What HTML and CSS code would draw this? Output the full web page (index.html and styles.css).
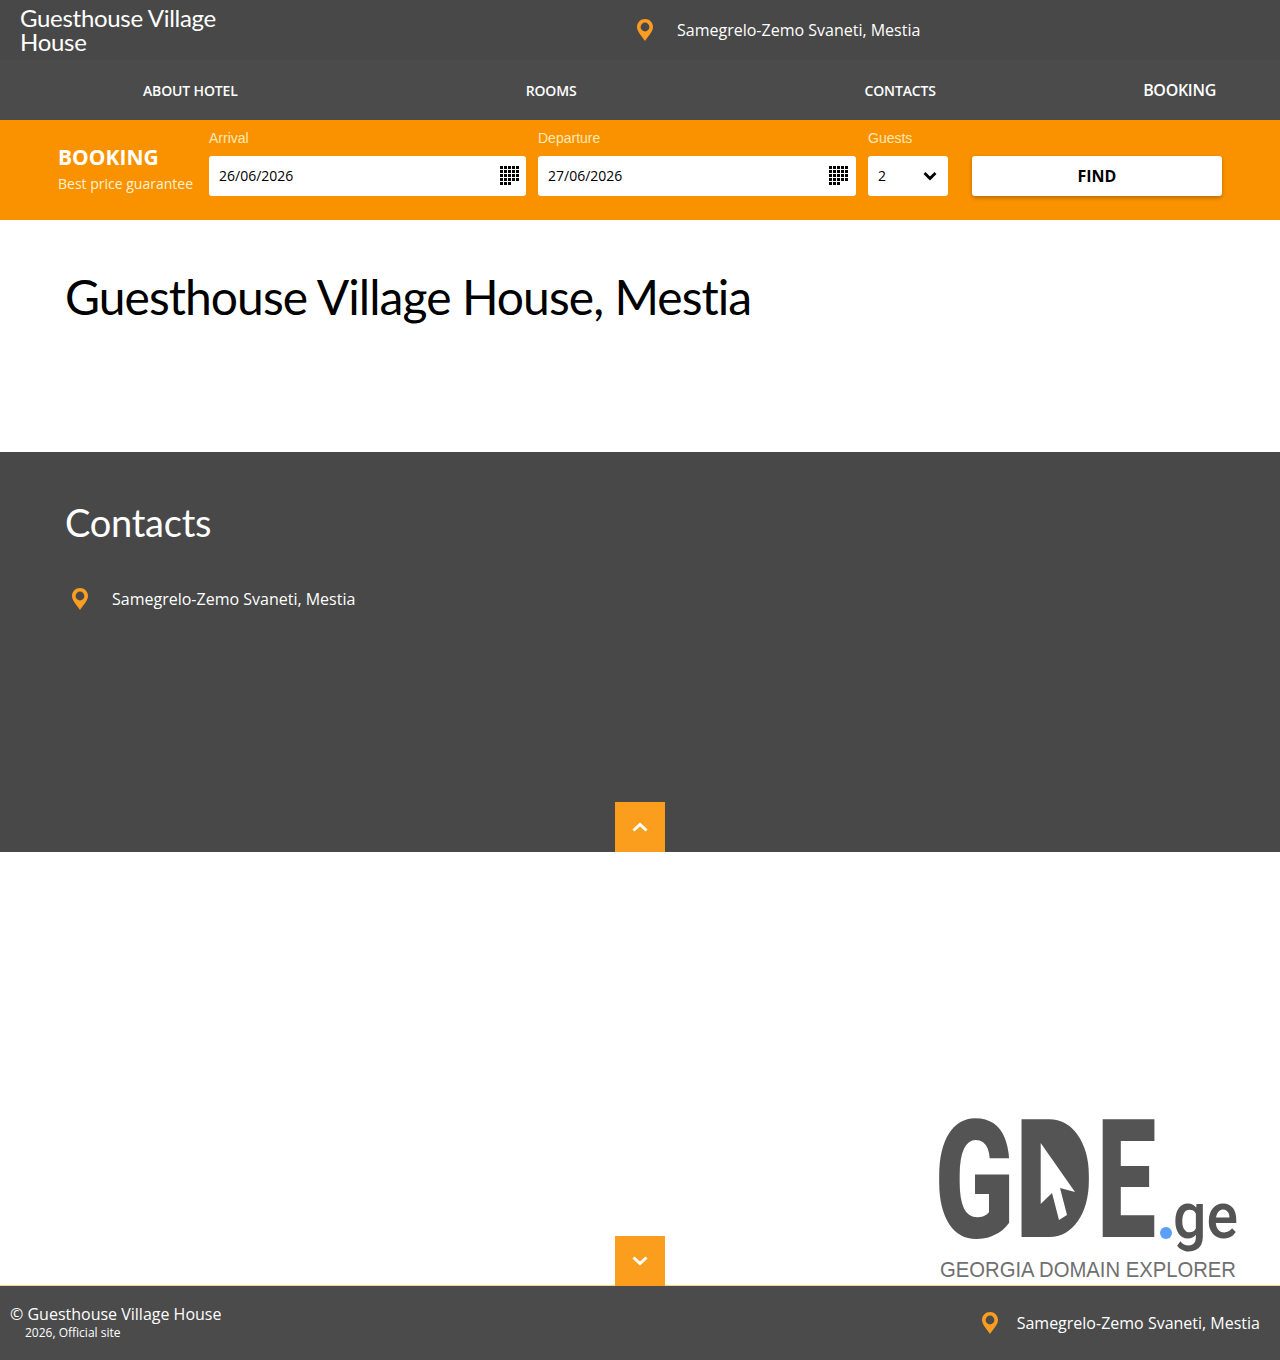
FILE: index.html
```html
<!DOCTYPE html>
<html lang="en">
<head>
    <meta charset="UTF-8">
    <meta name="viewport" content="width=device-width, initial-scale=1.0">
    <title>Guesthouse Village House, Mestia</title>
    <link rel="stylesheet" href="styles.css">
</head>
<body>
    <svg class="defs" width="0" height="0">
        <symbol id="pin" viewBox="0 0 18 22">
            <path fill-rule="evenodd" d="M9 0C4.600 0 1 3.500 1 8C1 12.500 6 17.500 9 22C12 17.500 17 12.500 17 8C17 3.500 13.400 0 9 0ZM9 3.600A4.400 4.400 0 1 1 9 12.400A4.400 4.400 0 1 1 9 3.600Z"/>
        </symbol>
        <symbol id="calendar" viewBox="0 0 19 19">
            <path d="M0 0h3v3h-3zM4 0h3v3h-3zM8 0h3v3h-3zM12 0h3v3h-3zM16 0h3v3h-3zM0 4h3v3h-3zM4 4h3v3h-3zM8 4h3v3h-3zM12 4h3v3h-3zM16 4h3v3h-3zM0 8h3v3h-3zM4 8h3v3h-3zM8 8h3v3h-3zM12 8h3v3h-3zM16 8h3v3h-3zM0 12h3v3h-3zM4 12h3v3h-3zM8 12h3v3h-3zM12 12h3v3h-3zM16 12h3v3h-3zM0 16h3v3h-3zM4 16h3v3h-3zM8 16h3v3h-3z"/>
        </symbol>
    </svg>

    <div class="top-bar">
        <div class="site-name">Guesthouse Village House</div>
        <div class="address top-address">
            <svg class="pin"><use href="#pin"></use></svg>
            <span>Samegrelo-Zemo Svaneti, Mestia</span>
        </div>
    </div>

    <nav class="main-nav">
        <a href="#">ABOUT HOTEL</a>
        <a href="#">ROOMS</a>
        <a href="#">CONTACTS</a>
        <a href="#" class="nav-booking">BOOKING</a>
    </nav>

    <form class="booking-bar">
        <div class="booking-title">
            <strong>BOOKING</strong>
            <span>Best price guarantee</span>
        </div>
        <div class="form-group arrival-group">
            <label for="arrival">Arrival</label>
            <div class="field">
                <input type="text" id="arrival" value="26/06/2026">
                <svg class="calendar"><use href="#calendar"></use></svg>
            </div>
        </div>
        <div class="form-group departure-group">
            <label for="departure">Departure</label>
            <div class="field">
                <input type="text" id="departure" value="27/06/2026">
                <svg class="calendar"><use href="#calendar"></use></svg>
            </div>
        </div>
        <div class="form-group guests-group">
            <label for="guests">Guests</label>
            <div class="field">
                <select id="guests">
                    <option>2</option>
                </select>
                <svg class="select-arrow" viewBox="0 0 14 10"><path d="M1.500 2L7 7.500L12.500 2" fill="none" stroke="#000" stroke-width="2.800"/></svg>
            </div>
        </div>
        <button type="button" class="find-btn">FIND</button>
    </form>

    <section class="intro">
        <h1>Guesthouse Village House, Mestia</h1>
    </section>

    <section class="contacts">
        <h2>Contacts</h2>
        <div class="address">
            <svg class="pin"><use href="#pin"></use></svg>
            <span>Samegrelo-Zemo Svaneti, Mestia</span>
        </div>
        <a href="#" class="scroll-btn">
            <svg viewBox="0 0 16 10"><path d="M1.500 8.500L8 2.500L14.500 8.500" fill="none" stroke="#fff" stroke-width="3"/></svg>
        </a>
    </section>

    <section class="logo-section">
        <svg class="gde-logo" viewBox="939 1117 300 168" role="img" aria-label="GDE.ge Georgia Domain Explorer">
            <text class="logo-big" x="934.600" y="1237" textLength="80" lengthAdjust="spacingAndGlyphs">G</text>
            <text class="logo-big" x="1015" y="1237" textLength="78" lengthAdjust="spacingAndGlyphs">D</text>
            <rect x="1038" y="1134" width="36" height="88" fill="#545454"/>
            <polygon fill="#fff" points="1040.700,1143 1075,1192 1060,1188 1067,1215 1059,1220 1052,1193 1040.700,1204"/>
            <text class="logo-big" x="1097" y="1237" textLength="59" lengthAdjust="spacingAndGlyphs">E</text>
            <circle cx="1166" cy="1233" r="6" fill="#5a9ffa"/>
            <text class="logo-ge" x="1173" y="1238" textLength="65" lengthAdjust="spacingAndGlyphs">ge</text>
            <text class="logo-small" x="940" y="1277" textLength="296" lengthAdjust="spacingAndGlyphs">GEORGIA DOMAIN EXPLORER</text>
        </svg>
        <a href="#" class="scroll-btn">
            <svg viewBox="0 0 16 10"><path d="M1.500 1.500L8 7.500L14.500 1.500" fill="none" stroke="#fff" stroke-width="3"/></svg>
        </a>
    </section>

    <footer class="footer">
        <div class="copyright">
            <div>© Guesthouse Village House</div>
            <small>2026, Official site</small>
        </div>
        <div class="address">
            <svg class="pin"><use href="#pin"></use></svg>
            <span>Samegrelo-Zemo Svaneti, Mestia</span>
        </div>
    </footer>
</body>
</html>
```

FILE: styles.css
```css
body {
    font-family: 'Open Sans', sans-serif;
    margin: 0;
    padding: 0;
    background-color: #fff;
    color: #000;
}
a {
    color: inherit;
    text-decoration: none;
}
.defs {
    position: absolute;
}

.top-bar {
    height: 60px;
    display: flex;
    align-items: center;
    background-color: #484848;
    color: #fff;
}
.site-name {
    width: 220px;
    margin-left: 20px;
    font-family: 'Lato', sans-serif;
    font-size: 24px;
    line-height: 24px;
    letter-spacing: -0.3px;
}
.address {
    display: flex;
    align-items: center;
    font-size: 16px;
    color: #fff;
}
.pin {
    width: 18px;
    height: 22px;
    margin-right: 23px;
    fill: #fa9d20;
}
.top-address {
    margin-left: 396px;
}

.main-nav {
    height: 60px;
    display: flex;
    align-items: center;
    background-color: #4b4b4b;
    color: #fff;
    font-size: 14px;
    font-weight: 600;
    letter-spacing: -0.15px;
}
.main-nav a {
    padding: 0 144px;
}
.main-nav a:first-child {
    padding-left: 143px;
}
.main-nav a.nav-booking {
    margin-left: auto;
    padding: 0 64px 1px 0;
    font-size: 16px;
    letter-spacing: -0.3px;
}

.booking-bar {
    height: 100px;
    box-sizing: border-box;
    display: flex;
    align-items: flex-start;
    padding: 0 58px;
    background-color: #fa9200;
    color: #fff;
}
.booking-title {
    width: 151px;
    padding-top: 23px;
    display: flex;
    flex-direction: column;
}
.booking-title strong {
    font-size: 21px;
    line-height: 28px;
}
.booking-title span {
    margin-top: 3px;
    font-size: 14px;
    line-height: 20px;
    color: #fff2d6;
}
.form-group {
    display: flex;
    flex-direction: column;
    margin-right: 12px;
}
.form-group label {
    height: 36px;
    line-height: 36px;
    font-family: 'Liberation Sans', sans-serif;
    font-size: 14px;
    color: #ffe9b8;
}
.arrival-group {
    width: 317px;
}
.departure-group {
    width: 318px;
}
.guests-group {
    width: 80px;
    margin-right: 24px;
}
.field {
    height: 40px;
    display: flex;
    align-items: center;
    background-color: #fff;
    border-radius: 3px;
}
.field input,
.field select {
    flex: 1;
    min-width: 0;
    height: 40px;
    box-sizing: border-box;
    padding: 0 0 2px 10px;
    border: none;
    outline: none;
    background: transparent;
    font-family: 'Open Sans', sans-serif;
    font-size: 14px;
    color: #000;
    appearance: none;
}
.calendar {
    width: 19px;
    height: 19px;
    margin: 0 7px 1px 0;
}
.departure-group .calendar {
    margin-right: 8px;
}
.select-arrow {
    width: 14px;
    height: 10px;
    margin-right: 11px;
}
.find-btn {
    width: 250px;
    height: 40px;
    margin-top: 36px;
    border: none;
    border-radius: 3px;
    background-color: #fff;
    box-shadow: 0 2px 4px rgba(0, 0, 0, 0.25);
    font-family: 'Open Sans', sans-serif;
    font-size: 16px;
    font-weight: 700;
    color: #000;
}

.intro {
    height: 232px;
    box-sizing: border-box;
    padding: 46px 65px 0;
}
.intro h1 {
    margin: 0;
    font-family: 'Lato', sans-serif;
    font-size: 48px;
    line-height: 62px;
    font-weight: 400;
    letter-spacing: -0.95px;
}

.contacts {
    position: relative;
    height: 400px;
    box-sizing: border-box;
    padding: 45px 65px 0;
    background-color: #484848;
    color: #fff;
}
.contacts h2 {
    margin: 0 0 41px;
    font-family: 'Lato', sans-serif;
    font-size: 38px;
    line-height: 50px;
    font-weight: 400;
    letter-spacing: -0.25px;
}
.contacts .address {
    padding-left: 6px;
}

.scroll-btn {
    position: absolute;
    left: 615px;
    bottom: 0;
    width: 50px;
    height: 50px;
    display: flex;
    align-items: center;
    justify-content: center;
    background-color: #fb9e1e;
}
.scroll-btn svg {
    width: 16px;
    height: 10px;
}

.logo-section {
    position: relative;
    height: 434px;
    box-sizing: border-box;
    display: flex;
    justify-content: flex-end;
    align-items: flex-end;
    padding-right: 41px;
    border-bottom: 1px solid #f5d67f;
}
.logo-section .scroll-btn {
    bottom: -1px;
}
.gde-logo {
    width: 300px;
    height: 168px;
    display: block;
}
.logo-big {
    font-family: 'Roboto', sans-serif;
    font-size: 166px;
    font-weight: 900;
    fill: #545454;
}
.logo-ge {
    font-family: 'Roboto', sans-serif;
    font-size: 64px;
    font-weight: 500;
    fill: #545454;
}
.logo-small {
    font-family: 'Liberation Sans', sans-serif;
    font-size: 22px;
    fill: #6f6f6f;
}

.footer {
    height: 74px;
    display: flex;
    align-items: center;
    justify-content: space-between;
    padding: 0 20px 0 10px;
    background-color: #4b4b4b;
    color: #fff;
}
.footer .pin {
    margin-right: 18px;
}
.copyright {
    margin-bottom: 1px;
    font-size: 16px;
    line-height: 20px;
}
.copyright small {
    display: block;
    margin-top: 1px;
    padding-left: 15px;
    font-size: 12px;
    line-height: 16px;
}
```
